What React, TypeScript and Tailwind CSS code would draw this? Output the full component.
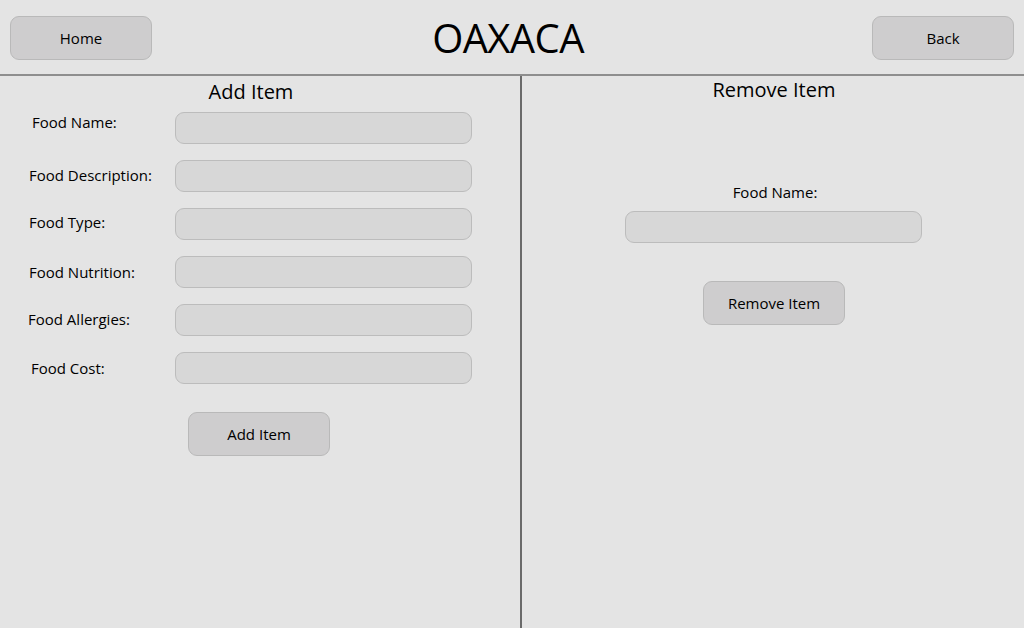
import React from "react";

const fields = [
  { label: "Food Name:", nudge: "pl-[32px] -mt-[12px]" },
  { label: "Food Description:", nudge: "pl-[29px] -mt-[1px]" },
  { label: "Food Type:", nudge: "pl-[29px] -mt-[3px]" },
  { label: "Food Nutrition:", nudge: "pl-[29px]" },
  { label: "Food Allergies:", nudge: "pl-[28px] -mt-[1px]" },
  { label: "Food Cost:", nudge: "pl-[31px]" },
];

function GreyButton({ children, className = "" }: { children: React.ReactNode; className?: string }) {
  return (
    <button
      className={`h-[44px] w-[142px] rounded-[9px] border border-[#b9b9b9] bg-[#cecdce] text-[15px] font-medium text-black ${className}`}
    >
      {children}
    </button>
  );
}

function TextBox({ className = "" }: { className?: string }) {
  return (
    <div className={`h-[32px] w-[297px] rounded-[9px] border border-[#bcbcbc] bg-[#d7d7d7] ${className}`} />
  );
}

export default function App() {
  return (
    <div
      className="flex h-[628px] w-[1024px] flex-col overflow-hidden bg-[#e4e4e4] text-black"
      style={{ fontFamily: '"Open Sans", "Noto Sans", sans-serif' }}
    >
      {/* Top bar */}
      <header className="flex h-[74px] items-start px-[10px] pt-[16px]">
        <GreyButton>Home</GreyButton>
        <h1 className="-mt-[8px] flex-1 pr-[8px] text-center text-[40px] font-medium leading-[60px] tracking-[-0.6px]">OAXACA</h1>
        <GreyButton>Back</GreyButton>
      </header>
      <div className="h-[2px] bg-[#8e8e8e]" />

      <div className="flex flex-1">
        {/* Add item */}
        <section className="flex w-[520px] flex-col pt-[2px]">
          <h2 className="pr-[18px] text-center text-[20px] font-medium leading-[28px]">Add Item</h2>
          <div className="mt-[6px] flex flex-col gap-[16px]">
            {fields.map((f) => (
              <div key={f.label} className="flex items-center">
                <span className={`w-[175px] text-[15px] font-medium ${f.nudge}`}>{f.label}</span>
                <TextBox />
              </div>
            ))}
          </div>
          <div className="mt-[28px] pl-[188px]">
            <GreyButton>Add Item</GreyButton>
          </div>
        </section>

        <div className="w-[2px] bg-[#6a6a6a]" />

        {/* Remove item */}
        <section className="flex flex-1 flex-col items-center">
          <h2 className="pl-[2px] text-center text-[20px] font-medium leading-[28px]">Remove Item</h2>
          <span className="mt-[77px] pl-[4px] text-[15px] font-medium leading-[22px]">Food Name:</span>
          <TextBox className="mt-[8px]" />
          <GreyButton className="mt-[38px] ml-[2px]">Remove Item</GreyButton>
        </section>
      </div>
    </div>
  );
}
